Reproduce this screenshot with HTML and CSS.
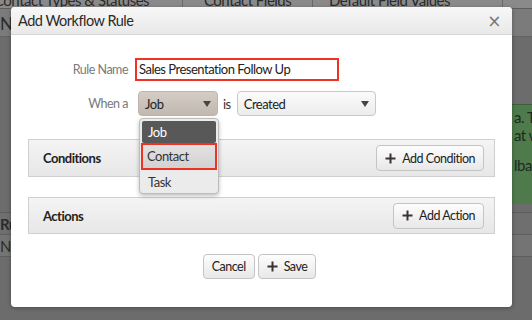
FILE: index.html
```html
<!DOCTYPE html>
<html lang="en">

<head>
    <meta charset="UTF-8">
    <title>Add Workflow Rule</title>
    <link rel="stylesheet" href="styles.css">
</head>

<body>
    <div class="page">
        <div class="backdrop">
            <div class="tabs">
                <span class="tab tab-first">Contact Types &amp; Statuses</span>
                <span class="tab tab-mid">Contact Fields</span>
                <span class="tab tab-last">Default Field Values</span>
            </div>
            <div class="bg-row bg-head">No</div>
            <div class="bg-green">
                <p>a. The</p>
                <p>at wi</p>
                <p class="gap">lba</p>
            </div>
            <div class="bg-table">
                <div class="bg-cell bold">Rules</div>
                <div class="bg-cell">Name</div>
            </div>
        </div>

        <div class="modal">
            <div class="modal-header">
                <h3>Add Workflow Rule</h3>
                <span class="close">&times;</span>
            </div>
            <div class="modal-body">
                <div class="form-row">
                    <label>Rule Name</label>
                    <div class="input highlighted">Sales Presentation Follow Up</div>
                </div>
                <div class="form-row row-when">
                    <label>When a</label>
                    <div class="select select-open">
                        Job
                        <span class="caret"></span>
                        <ul class="menu">
                            <li class="active">Job</li>
                            <li class="marked">Contact</li>
                            <li>Task</li>
                        </ul>
                    </div>
                    <span class="is">is</span>
                    <div class="select select-wide">
                        Created
                        <span class="caret"></span>
                    </div>
                </div>

                <div class="panel">
                    <span class="panel-title">Conditions</span>
                    <button class="btn">
                        <svg width="11" height="11" viewBox="0 0 11 11"><path d="M5.5 0.5v10M0.5 5.5h10" stroke="#3a3330" stroke-width="2"/></svg>
                        Add Condition
                    </button>
                </div>

                <div class="panel panel-actions">
                    <span class="panel-title">Actions</span>
                    <button class="btn">
                        <svg width="11" height="11" viewBox="0 0 11 11"><path d="M5.5 0.5v10M0.5 5.5h10" stroke="#3a3330" stroke-width="2"/></svg>
                        Add Action
                    </button>
                </div>

                <div class="footer">
                    <button class="btn">Cancel</button>
                    <button class="btn">
                        <svg width="11" height="11" viewBox="0 0 11 11"><path d="M5.5 0.5v10M0.5 5.5h10" stroke="#3a3330" stroke-width="2"/></svg>
                        Save
                    </button>
                </div>
            </div>
        </div>
    </div>
</body>

</html>
```

FILE: styles.css
```css
body {
    margin: 0;
    font-family: Lato, 'Open Sans', Arial, sans-serif;
    letter-spacing: -0.5px;
    background-color: #6c6c6c;
}

.page {
    position: relative;
    width: 532px;
    height: 320px;
    overflow: hidden;
    background-color: #6c6c6c;
}

/* dimmed page behind the dialog */
.backdrop {
    display: flex;
    flex-direction: column;
    height: 100%;
}

.tabs {
    display: flex;
    height: 8px;
    overflow: hidden;
    background-color: #8a8a8a;
    border-bottom: 1px solid #5e5e5e;
}

.tab {
    font-size: 15px;
    line-height: 15px;
    color: #2b2b2b;
    margin-top: -7px;
    border-right: 1px solid #6a6a6a;
    box-sizing: border-box;
    white-space: nowrap;
    overflow: hidden;
}

.tab-first {
    width: 183px;
    padding-left: 0;
    text-indent: -6px;
}

.tab-mid {
    width: 130px;
    padding-left: 21px;
}

.tab-last {
    width: 190px;
    padding-left: 16px;
}

.bg-row {
    height: 27px;
    background-color: #7b7b7b;
    color: #2b2b2b;
    font-size: 17px;
    line-height: 30px;
}

.bg-head {
    border-bottom: 1px solid #626262;
}

.bg-green {
    margin: 67px 0 0 480px;
    height: 100px;
    background-color: #4f7a4c;
    border-top: 1px solid #3e5f3c;
    color: #1e2a1d;
    font-size: 15px;
    white-space: nowrap;
    padding: 3px 0 0 34px;
    box-sizing: border-box;
}

.bg-green p {
    margin: 0;
    line-height: 18px;
}

.bg-green p.gap {
    margin-top: 12px;
}

.bg-table {
    margin-top: 8px;
    border-top: 1px solid #5e5e5e;
}

.bg-cell {
    height: 21px;
    line-height: 22px;
    font-size: 15px;
    color: #2b2b2b;
    border-bottom: 1px solid #5e5e5e;
    background-color: #747474;
}

.bg-cell.bold {
    font-weight: bold;
    background-color: #6f6f6f;
}

/* dialog */
.modal {
    position: absolute;
    left: 11px;
    top: 7px;
    width: 501px;
    height: 300px;
    background-color: #ffffff;
    border-radius: 4px;
    box-shadow: 0 1px 4px rgba(0, 0, 0, 0.3);
}

.modal-header {
    display: flex;
    align-items: center;
    justify-content: space-between;
    height: 28px;
    padding: 0 11px 0 7px;
    background: linear-gradient(#f7f7f7, #e9e9e9);
    border-bottom: 1px solid #d6d6d6;
    border-radius: 4px 4px 0 0;
    box-sizing: border-box;
}

.modal-header h3 {
    margin: 0;
    font-size: 14.5px;
    font-weight: normal;
    color: #2a2a2a;
}

.close {
    font-size: 17px;
    color: #777;
    font-family: 'DejaVu Sans', sans-serif;
}

.modal-body {
    padding: 23px 17px 0;
}

.form-row {
    display: flex;
    align-items: center;
    height: 23px;
}

.form-row label {
    width: 100px;
    text-align: right;
    font-size: 12.5px;
    color: #7a7a7a;
    margin-right: 7px;
}

.row-when {
    height: 25px;
    margin-top: 10px;
}

.row-when label {
    margin-right: 10px;
}

.input {
    width: 204px;
    height: 23px;
    border: 2px solid #ee3224;
    box-sizing: border-box;
    font-size: 13px;
    line-height: 19px;
    padding-left: 2px;
    color: #222;
}

.select {
    position: relative;
    display: flex;
    align-items: center;
    justify-content: space-between;
    width: 80px;
    height: 25px;
    padding: 0 6px;
    box-sizing: border-box;
    font-size: 13px;
    color: #222;
    border: 1px solid #c8c8c8;
    border-radius: 4px;
    background: linear-gradient(#fbfbfb, #ececec);
}

.select-open {
    background: linear-gradient(#d4cdc6, #c1b8af);
    border-color: #bdb5ad;
}

.select-wide {
    width: 139px;
    margin-left: 6px;
}

.caret {
    width: 0;
    height: 0;
    border-left: 4px solid transparent;
    border-right: 4px solid transparent;
    border-top: 6px solid #4a4440;
}

.is {
    font-size: 13px;
    color: #333;
    margin-left: 5px;
}

.menu {
    position: absolute;
    top: 26px;
    left: 0;
    width: 80px;
    height: 76px;
    margin: 0;
    padding: 2px 0 0;
    list-style: none;
    background-color: #ebebeb;
    border: 1px solid #bcbcbc;
    border-radius: 4px;
    box-shadow: 0 2px 4px rgba(0, 0, 0, 0.25);
    box-sizing: border-box;
    z-index: 2;
}

.menu li {
    height: 24px;
    line-height: 24px;
    padding-left: 6px;
    margin: 0 2px;
    font-size: 13px;
    color: #333;
}

.menu li.active {
    background-color: #585858;
    color: #ffffff;
    border-radius: 2px;
    height: 22px;
    line-height: 22px;
}

.menu li.marked {
    border: 2px solid #ee3224;
    background: linear-gradient(#e2e2e2, #d2d2d2);
    height: 23px;
    line-height: 23px;
    padding-left: 4px;
    margin: 0 1px;
}

.panel {
    display: flex;
    align-items: center;
    justify-content: space-between;
    height: 38px;
    margin-top: 23px;
    padding: 0 10px 0 14px;
    background: linear-gradient(#f4f4f4, #e7e7e7);
    border: 1px solid #cfcfcf;
    box-sizing: border-box;
}

.panel-actions {
    height: 37px;
    margin-top: 20px;
}

.panel-title {
    font-size: 13px;
    font-weight: bold;
    color: #222;
}

.btn {
    display: inline-flex;
    align-items: center;
    gap: 6px;
    height: 26px;
    padding: 0 8px;
    font-family: inherit;
    letter-spacing: inherit;
    font-size: 12.5px;
    color: #222;
    background: linear-gradient(#fdfdfd, #e8e8e8);
    border: 1px solid #c4c4c4;
    border-radius: 4px;
}

.footer {
    display: flex;
    justify-content: center;
    gap: 3px;
    margin-top: 20px;
    padding-right: 4px;
}

.footer .btn {
    height: 25px;
    padding: 0 8px;
}
```
